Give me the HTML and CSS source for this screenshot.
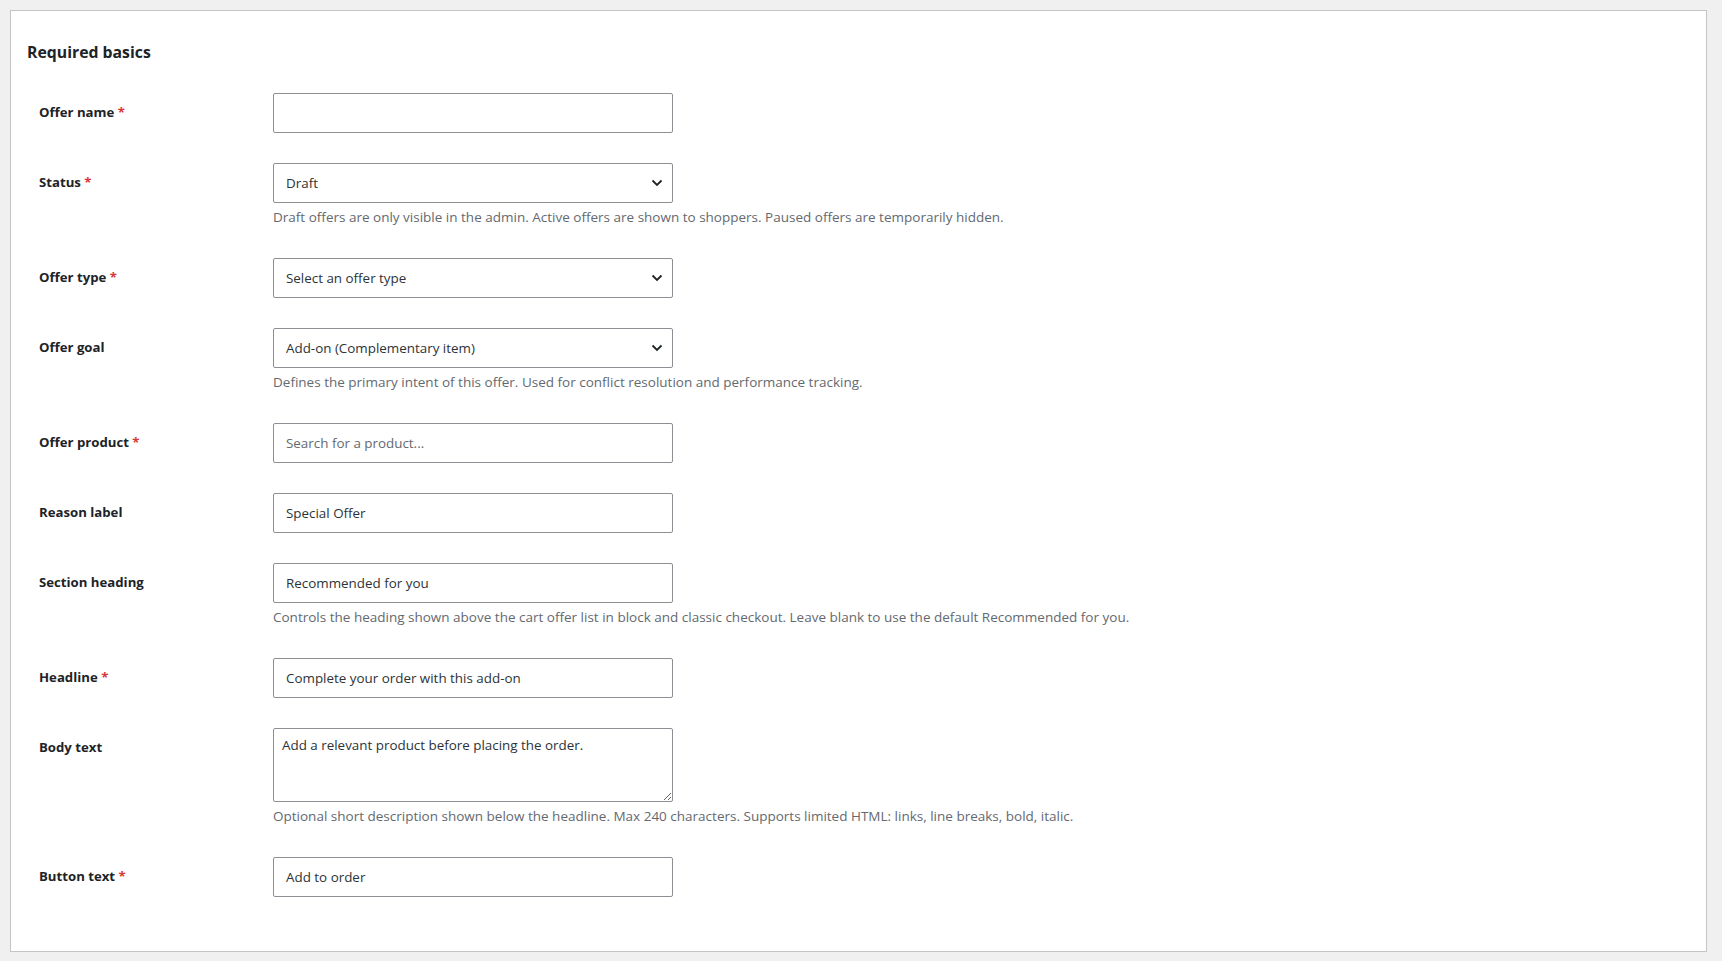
FILE: index.html
```html
<!DOCTYPE html>
<html lang="en">
<head>
<meta charset="utf-8">
<title>Required basics</title>
<link rel="stylesheet" href="styles.css">
</head>
<body>
<div class="wrap">
  <div class="panel">
    <h2 class="panel-title">Required basics</h2>
    <div class="form">
      <div class="row">
        <label class="label" for="f-name">Offer name <span class="req">*</span></label>
        <div class="field">
          <input class="input" id="f-name" type="text" value="">
        </div>
      </div>
      <div class="row">
        <label class="label" for="f-status">Status <span class="req">*</span></label>
        <div class="field">
          <div class="select-wrap">
            <select class="input select" id="f-status"><option>Draft</option><option>Active</option><option>Paused</option></select>
            <svg class="chev" width="12" height="8" viewBox="0 0 12 8"><path d="M1.5 1.5 L6 6 L10.5 1.5" fill="none" stroke="#1d2327" stroke-width="1.8"/></svg>
          </div>
          <p class="desc">Draft offers are only visible in the admin. Active offers are shown to shoppers. Paused offers are temporarily hidden.</p>
        </div>
      </div>
      <div class="row">
        <label class="label" for="f-type">Offer type <span class="req">*</span></label>
        <div class="field">
          <div class="select-wrap">
            <select class="input select" id="f-type"><option>Select an offer type</option></select>
            <svg class="chev" width="12" height="8" viewBox="0 0 12 8"><path d="M1.5 1.5 L6 6 L10.5 1.5" fill="none" stroke="#1d2327" stroke-width="1.8"/></svg>
          </div>
        </div>
      </div>
      <div class="row">
        <label class="label" for="f-goal">Offer goal</label>
        <div class="field">
          <div class="select-wrap">
            <select class="input select" id="f-goal"><option>Add-on (Complementary item)</option></select>
            <svg class="chev" width="12" height="8" viewBox="0 0 12 8"><path d="M1.5 1.5 L6 6 L10.5 1.5" fill="none" stroke="#1d2327" stroke-width="1.8"/></svg>
          </div>
          <p class="desc">Defines the primary intent of this offer. Used for conflict resolution and performance tracking.</p>
        </div>
      </div>
      <div class="row">
        <label class="label" for="f-product">Offer product <span class="req">*</span></label>
        <div class="field">
          <input class="input" id="f-product" type="text" placeholder="Search for a product...">
        </div>
      </div>
      <div class="row">
        <label class="label" for="f-reason">Reason label</label>
        <div class="field">
          <input class="input" id="f-reason" type="text" value="Special Offer">
        </div>
      </div>
      <div class="row">
        <label class="label" for="f-heading">Section heading</label>
        <div class="field">
          <input class="input" id="f-heading" type="text" value="Recommended for you">
          <p class="desc">Controls the heading shown above the cart offer list in block and classic checkout. Leave blank to use the default Recommended for you.</p>
        </div>
      </div>
      <div class="row">
        <label class="label" for="f-headline">Headline <span class="req">*</span></label>
        <div class="field">
          <input class="input" id="f-headline" type="text" value="Complete your order with this add-on">
        </div>
      </div>
      <div class="row">
        <label class="label" for="f-body">Body text</label>
        <div class="field">
          <textarea class="input textarea" id="f-body">Add a relevant product before placing the order.</textarea>
          <p class="desc">Optional short description shown below the headline. Max 240 characters. Supports limited HTML: links, line breaks, bold, italic.</p>
        </div>
      </div>
      <div class="row">
        <label class="label" for="f-button">Button text <span class="req">*</span></label>
        <div class="field">
          <input class="input" id="f-button" type="text" value="Add to order">
        </div>
      </div>
    </div>
  </div>
</div>
</body>
</html>
```

FILE: styles.css
```css
html, body {
  margin: 0;
  padding: 0;
  background: #f0f0f1;
}

body {
  font-family: "Open Sans", "Noto Sans", sans-serif;
  font-size: 13px;
  color: #1d2327;
}

.wrap {
  padding: 10px 15px 0 10px;
}

.panel {
  background: #ffffff;
  border: 1px solid #c3c4c7;
  padding: 31px 15px 39px 16px;
}

.panel-title {
  margin: 0 0 16px 0;
  font-size: 15.8px;
  line-height: 20px;
  font-weight: 700;
  color: #1d2327;
}

.form {
  display: flex;
  flex-direction: column;
}

.row {
  display: grid;
  grid-template-columns: 246px 1fr;
  padding: 15px 0;
}

.label {
  padding: 9px 0 0 12px;
  font-size: 13.2px;
  line-height: 20px;
  font-weight: 700;
  color: #1d2327;
}

.req {
  color: #d63638;
}

.field {
  display: flex;
  flex-direction: column;
  align-items: flex-start;
}

.input {
  box-sizing: border-box;
  width: 400px;
  height: 40px;
  margin: 0;
  padding: 0 12px;
  border: 1px solid #8c8f94;
  border-radius: 2px;
  background: #ffffff;
  font-family: "Open Sans", "Noto Sans", sans-serif;
  font-size: 13.4px;
  color: #2c3338;
  outline: none;
}

.input::placeholder {
  color: #646970;
  opacity: 1;
}

.select-wrap {
  position: relative;
  width: 400px;
  height: 40px;
}

.select {
  appearance: none;
  -webkit-appearance: none;
  padding-right: 30px;
}

.chev {
  position: absolute;
  right: 10px;
  top: 16px;
  pointer-events: none;
}

.textarea {
  height: 74px;
  padding: 6px 8px;
  line-height: 20px;
  resize: vertical;
  display: block;
}

.desc {
  margin: 4px 0 0 0;
  font-size: 13.5px;
  line-height: 21px;
  color: #646970;
}
```
